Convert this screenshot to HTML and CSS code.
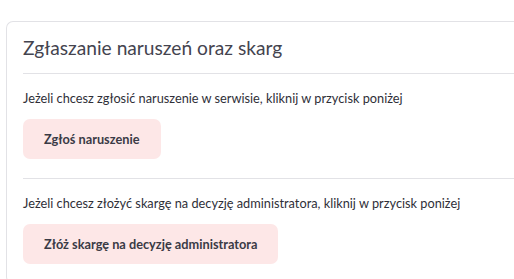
FILE: index.html
```html
<!DOCTYPE html>
<html lang="pl">

<head>
    <meta charset="UTF-8">
    <meta name="viewport" content="width=device-width, initial-scale=1.0">
    <title>Zgłaszanie naruszeń oraz skarg</title>
    <link rel="stylesheet" href="styles.css">
</head>

<body>
    <div class="card">
        <div class="card-header">
            <h2>Zgłaszanie naruszeń oraz skarg</h2>
        </div>
        <div class="section">
            <p>Jeżeli chcesz zgłosić naruszenie w serwisie, kliknij w przycisk poniżej</p>
            <button class="btn">Zgłoś naruszenie</button>
        </div>
        <div class="section">
            <p>Jeżeli chcesz złożyć skargę na decyzję administratora, kliknij w przycisk poniżej</p>
            <button class="btn">Złóż skargę na decyzję administratora</button>
        </div>
    </div>
</body>

</html>
```

FILE: styles.css
```css
* {
    font-family: Lato, "Open Sans", sans-serif;
    box-sizing: border-box;
}

body {
    margin: 0;
    padding: 21px 0 0 6px;
    background-color: #fff;
    overflow: hidden;
}

.card {
    border: 1px solid #e2e2e6;
    border-right: none;
    border-radius: 7px 0 0 7px;
    padding-left: 16px;
    background-color: #fff;
}

.card-header {
    height: 52px;
    display: flex;
    align-items: center;
    border-bottom: 1px solid #e2e2e6;
}

h2 {
    margin: 0;
    font-size: 19.2px;
    font-weight: 400;
    color: #44444f;
}

.section {
    padding: 16px 0 19px;
    border-bottom: 1px solid #e2e2e6;
}

.section:last-child {
    border-bottom: none;
}

.section p {
    margin: 0 0 13px;
    font-size: 12.75px;
    color: #2f2f38;
}

.btn {
    display: block;
    height: 40px;
    padding: 0 21px;
    border: none;
    border-radius: 7px;
    background-color: #fde7e7;
    color: #3a3a45;
    font-size: 12.75px;
    font-weight: 700;
}
```
